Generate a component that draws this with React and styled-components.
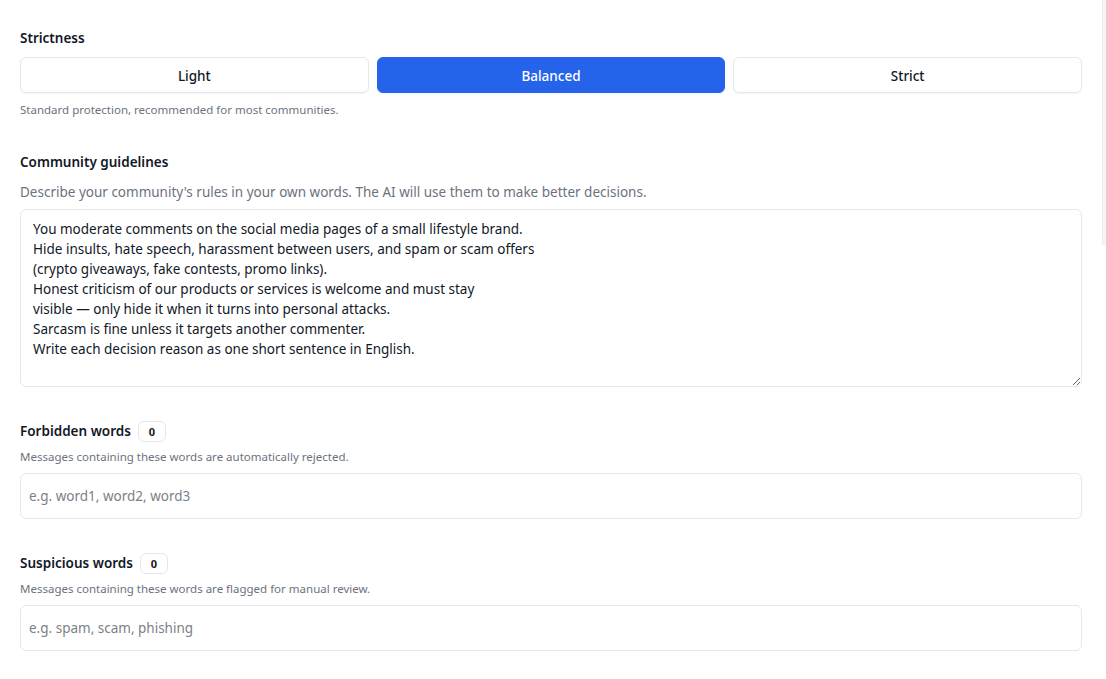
import React, { useState } from "react";
import styled, { createGlobalStyle } from "styled-components";

const GlobalStyle = createGlobalStyle`
  html, body {
    margin: 0;
    padding: 0;
    background: #ffffff;
    font-family: "Noto Sans", "Open Sans", sans-serif;
    color: #111827;
  }
  * { box-sizing: border-box; }
`;

const Page = styled.div`
  display: flex;
  width: 1106px;
  height: 679px;
  overflow: hidden;
`;

const Form = styled.div`
  flex: 1;
  padding: 27px 20px 0 20px;
  display: flex;
  flex-direction: column;
`;

const Scrollbar = styled.div`
  width: 4px;
  height: 245px;
  background: #f4f4f4;
  border-left: 1px solid #ececec;
`;

const Section = styled.section`
  display: flex;
  flex-direction: column;
  margin-bottom: ${(p) => p.$gap || 0}px;
`;

const LabelRow = styled.div`
  display: flex;
  align-items: center;
  gap: 7px;
  height: 22px;
`;

const Label = styled.label`
  font-size: 13.5px;
  font-weight: 600;
  color: #111827;
`;

const Badge = styled.span`
  display: inline-flex;
  align-items: center;
  justify-content: center;
  min-width: 28px;
  height: 21px;
  padding: 0 8px;
  border: 1px solid #e5e7eb;
  border-radius: 6px;
  font-size: 11px;
  font-weight: 700;
  color: #111827;
`;

const Hint = styled.p`
  margin: ${(p) => p.$mt || 0}px 0 0;
  font-size: ${(p) => (p.$large ? 13.5 : 11.5)}px;
  line-height: 16px;
  color: #6b7280;
`;

const Segments = styled.div`
  display: grid;
  grid-template-columns: repeat(3, 1fr);
  gap: 8px;
  margin-top: 8px;
`;

const Segment = styled.button`
  height: 36px;
  padding-top: 2px;
  border-radius: 6px;
  border: 1px solid ${(p) => (p.$active ? "#2563eb" : "#e5e7eb")};
  background: ${(p) => (p.$active ? "#2563eb" : "#ffffff")};
  color: ${(p) => (p.$active ? "#ffffff" : "#111827")};
  box-shadow: 0 1px 2px rgba(0, 0, 0, 0.04);
  font-family: inherit;
  font-size: 13.5px;
  font-weight: 500;
  cursor: pointer;
`;

const TextArea = styled.textarea`
  margin-top: 9px;
  width: 100%;
  height: 178px;
  padding: 9px 12px;
  border: 1px solid #e5e7eb;
  border-radius: 6px;
  font-family: inherit;
  font-size: 13.5px;
  line-height: 20px;
  color: #111827;
  resize: vertical;
  outline: none;
`;

const Input = styled.input`
  margin-top: 8px;
  width: 100%;
  height: 46px;
  padding: 0 8px;
  border: 1px solid #e5e7eb;
  border-radius: 6px;
  font-family: inherit;
  font-size: 13.5px;
  color: #111827;
  outline: none;

  &::placeholder {
    color: #7b7f87;
  }
`;

const levels = [
  { id: "light", label: "Light" },
  { id: "balanced", label: "Balanced" },
  { id: "strict", label: "Strict" },
];

const guidelines = `You moderate comments on the social media pages of a small lifestyle brand.
Hide insults, hate speech, harassment between users, and spam or scam offers
(crypto giveaways, fake contests, promo links).
Honest criticism of our products or services is welcome and must stay
visible — only hide it when it turns into personal attacks.
Sarcasm is fine unless it targets another commenter.
Write each decision reason as one short sentence in English.`;

const WordList = ({ label, hint, placeholder }) => {
  const [value, setValue] = useState("");
  const count = value.split(",").filter((w) => w.trim()).length;
  return (
    <Section $gap={33}>
      <LabelRow>
        <Label>{label}</Label>
        <Badge>{count}</Badge>
      </LabelRow>
      <Hint $mt={7}>{hint}</Hint>
      <Input
        value={value}
        placeholder={placeholder}
        onChange={(e) => setValue(e.target.value)}
      />
    </Section>
  );
};

const App = () => {
  const [level, setLevel] = useState("balanced");
  const [text, setText] = useState(guidelines);

  return (
    <Page>
      <GlobalStyle />
      <Form>
        <Section $gap={33}>
          <LabelRow>
            <Label>Strictness</Label>
          </LabelRow>
          <Segments>
            {levels.map((l) => (
              <Segment
                key={l.id}
                $active={level === l.id}
                onClick={() => setLevel(l.id)}
              >
                {l.label}
              </Segment>
            ))}
          </Segments>
          <Hint $mt={9}>Standard protection, recommended for most communities.</Hint>
        </Section>

        <Section $gap={33}>
          <LabelRow>
            <Label>Community guidelines</Label>
          </LabelRow>
          <Hint $large $mt={11}>
            Describe your community's rules in your own words. The AI will use
            them to make better decisions.
          </Hint>
          <TextArea value={text} onChange={(e) => setText(e.target.value)} />
        </Section>

        <WordList
          label="Forbidden words"
          hint="Messages containing these words are automatically rejected."
          placeholder="e.g. word1, word2, word3"
        />
        <WordList
          label="Suspicious words"
          hint="Messages containing these words are flagged for manual review."
          placeholder="e.g. spam, scam, phishing"
        />
      </Form>
      <Scrollbar />
    </Page>
  );
};

export default App;
